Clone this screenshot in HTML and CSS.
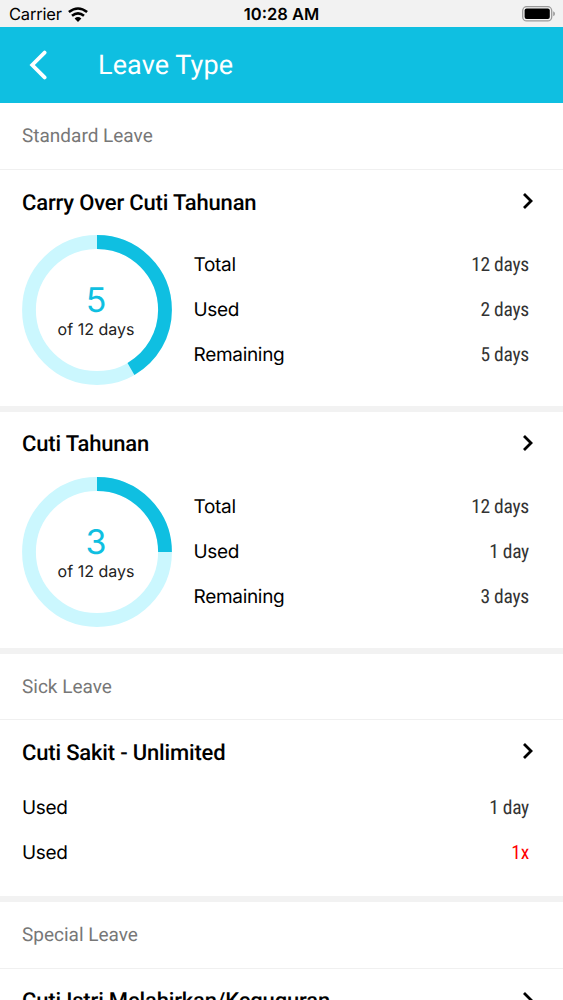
FILE: index.html
```html
<!DOCTYPE html>
<html lang="id">
<head>
<meta charset="utf-8">
<title>Leave Type</title>
<link rel="stylesheet" href="styles.css">
</head>
<body>
<div class="screen">
  <div class="status">
    <span class="carrier">Carrier</span>
    <svg class="wifi" width="20" height="15" viewBox="0 0 20 15"><g fill="none" stroke="#000" stroke-width="2.6"><path d="M.9 5.1Q10-2.1 19.1 5.1"/><path d="M4 8.8Q10 3.8 16 8.8"/></g><path d="M6.6 11.4Q10 8.6 13.4 11.4L10 15Z"/></svg>
    <span class="time">10:28 AM</span>
    <svg class="battery" width="34" height="16" viewBox="0 0 34 16"><rect x=".7" y=".7" width="29" height="14.2" rx="4" fill="none" stroke="#999" stroke-width="1.3"/><rect x="2.6" y="2.6" width="25.2" height="10.4" rx="2"/><path d="M31.2 5.2Q33 6 33 7.7T31.2 10.2Z" fill="#999"/></svg>
  </div>
  <header class="bar">
    <svg class="back" width="20" height="30" viewBox="0 0 20 30"><path d="M16.6 2.6L4.2 15L16.6 27.4" fill="none" stroke="#fff" stroke-width="3.8" stroke-linecap="round"/></svg>
    <h1>Leave Type</h1>
  </header>
  <h2 class="group">Standard Leave</h2>
  <section class="card">
    <div class="title"><h3>Carry Over Cuti Tahunan</h3><svg class="chevron" width="12" height="18" viewBox="0 0 12 18"><path d="M2 2L9 9L2 16" fill="none" stroke="#000" stroke-width="2.8"/></svg></div>
    <div class="content">
      <div class="ring">
        <svg width="150" height="150" viewBox="0 0 150 150"><circle class="track" cx="75" cy="75" r="68"/><circle class="value" cx="75" cy="75" r="68" pathLength="12" stroke-dasharray="5 12" transform="rotate(-90 75 75)"/></svg>
        <div class="label"><b>5</b><span>of 12 days</span></div>
      </div>
      <dl><div><dt>Total</dt><dd>12 days</dd></div><div><dt>Used</dt><dd>2 days</dd></div><div><dt>Remaining</dt><dd>5 days</dd></div></dl>
    </div>
  </section>
  <section class="card">
    <div class="title"><h3>Cuti Tahunan</h3><svg class="chevron" width="12" height="18" viewBox="0 0 12 18"><path d="M2 2L9 9L2 16" fill="none" stroke="#000" stroke-width="2.8"/></svg></div>
    <div class="content">
      <div class="ring">
        <svg width="150" height="150" viewBox="0 0 150 150"><circle class="track" cx="75" cy="75" r="68"/><circle class="value" cx="75" cy="75" r="68" pathLength="12" stroke-dasharray="3 12" transform="rotate(-90 75 75)"/></svg>
        <div class="label"><b>3</b><span>of 12 days</span></div>
      </div>
      <dl><div><dt>Total</dt><dd>12 days</dd></div><div><dt>Used</dt><dd>1 day</dd></div><div><dt>Remaining</dt><dd>3 days</dd></div></dl>
    </div>
  </section>
  <h2 class="group">Sick Leave</h2>
  <section class="card short">
    <div class="title"><h3>Cuti Sakit - Unlimited</h3><svg class="chevron" width="12" height="18" viewBox="0 0 12 18"><path d="M2 2L9 9L2 16" fill="none" stroke="#000" stroke-width="2.8"/></svg></div>
    <dl><div><dt>Used</dt><dd>1 day</dd></div><div><dt>Used</dt><dd class="alert">1x</dd></div></dl>
  </section>
  <h2 class="group">Special Leave</h2>
  <section class="card">
    <div class="title"><h3>Cuti Istri Melahirkan/Keguguran</h3><svg class="chevron" width="12" height="18" viewBox="0 0 12 18"><path d="M2 2L9 9L2 16" fill="none" stroke="#000" stroke-width="2.8"/></svg></div>
  </section>
</div>
</body>
</html>
```
FILE: styles.css
```css
* { box-sizing: border-box; margin: 0; }
body { background: #fff; font-family: Roboto, sans-serif; color: #000; text-rendering: geometricPrecision; }
.screen { width: 563px; height: 1000px; overflow: hidden; }
.status { height: 27px; background: #f2f2f2; display: grid; grid-template-columns: auto auto 1fr auto; align-items: center; padding: 0 7px 0 9px; font-family: Inter, sans-serif; position: relative; }
.carrier { font-size: 16.5px; line-height: 27px; padding-top: 1px; letter-spacing: -.2px; }
.wifi { margin-left: 6px; }
.time { position: absolute; left: 0; right: 0; top: 0; text-align: center; font-size: 16.5px; font-weight: 600; line-height: 29px; }
.battery { grid-column: 4; }
.bar { height: 76.4px; background: #0fbfe1; display: flex; align-items: center; padding: 0 0 0 28px; color: #fff; }
.bar h1 { margin-left: 50px; font-size: 27px; font-weight: 400; letter-spacing: .1px; }
.group { height: 66.6px; line-height: 66.8px; padding-left: 22px; border-bottom: 1px solid #f0f0f0; font-size: 19px; font-weight: 400; color: #777; }
.card { height: 241.8px; border-bottom: 6px solid #f2f2f2; padding: 0 29px 0 22px; }
.short { height: 182px; }
.title { height: 65px; padding-top: 1.4px; display: flex; align-items: center; justify-content: space-between; }
.title h3 { font-size: 22px; font-weight: 500; letter-spacing: -.17px; }
.chevron { margin-bottom: 4px; }
.content { display: flex; gap: 21.5px; }
.ring { width: 150px; height: 150px; display: grid; }
.ring > * { grid-area: 1 / 1; }
.ring circle { fill: none; stroke-width: 13.8; }
.track { stroke: #cbf7fe; }
.value { stroke: #0fbfe1; }
.label { display: flex; flex-direction: column; align-items: center; padding: 47px 2px 0 0; }
.label b { font: 400 34px/37px Inter, sans-serif; color: #0fbfe1; }
.label span { font: 400 16px/20px Inter, sans-serif; color: #222; }
dl { flex: 1; padding: 8px 5px 0 0; }
dl > div { height: 45px; display: flex; align-items: center; justify-content: space-between; }
dt { font: 400 19px/24px Inter, sans-serif; letter-spacing: -.3px; }
dd { font: 400 19.5px/24px "Roboto Condensed", Roboto, sans-serif; letter-spacing: -.25px; color: #333; }
.short dl { padding-top: 0; }
dd.alert { color: #f00; }
```
